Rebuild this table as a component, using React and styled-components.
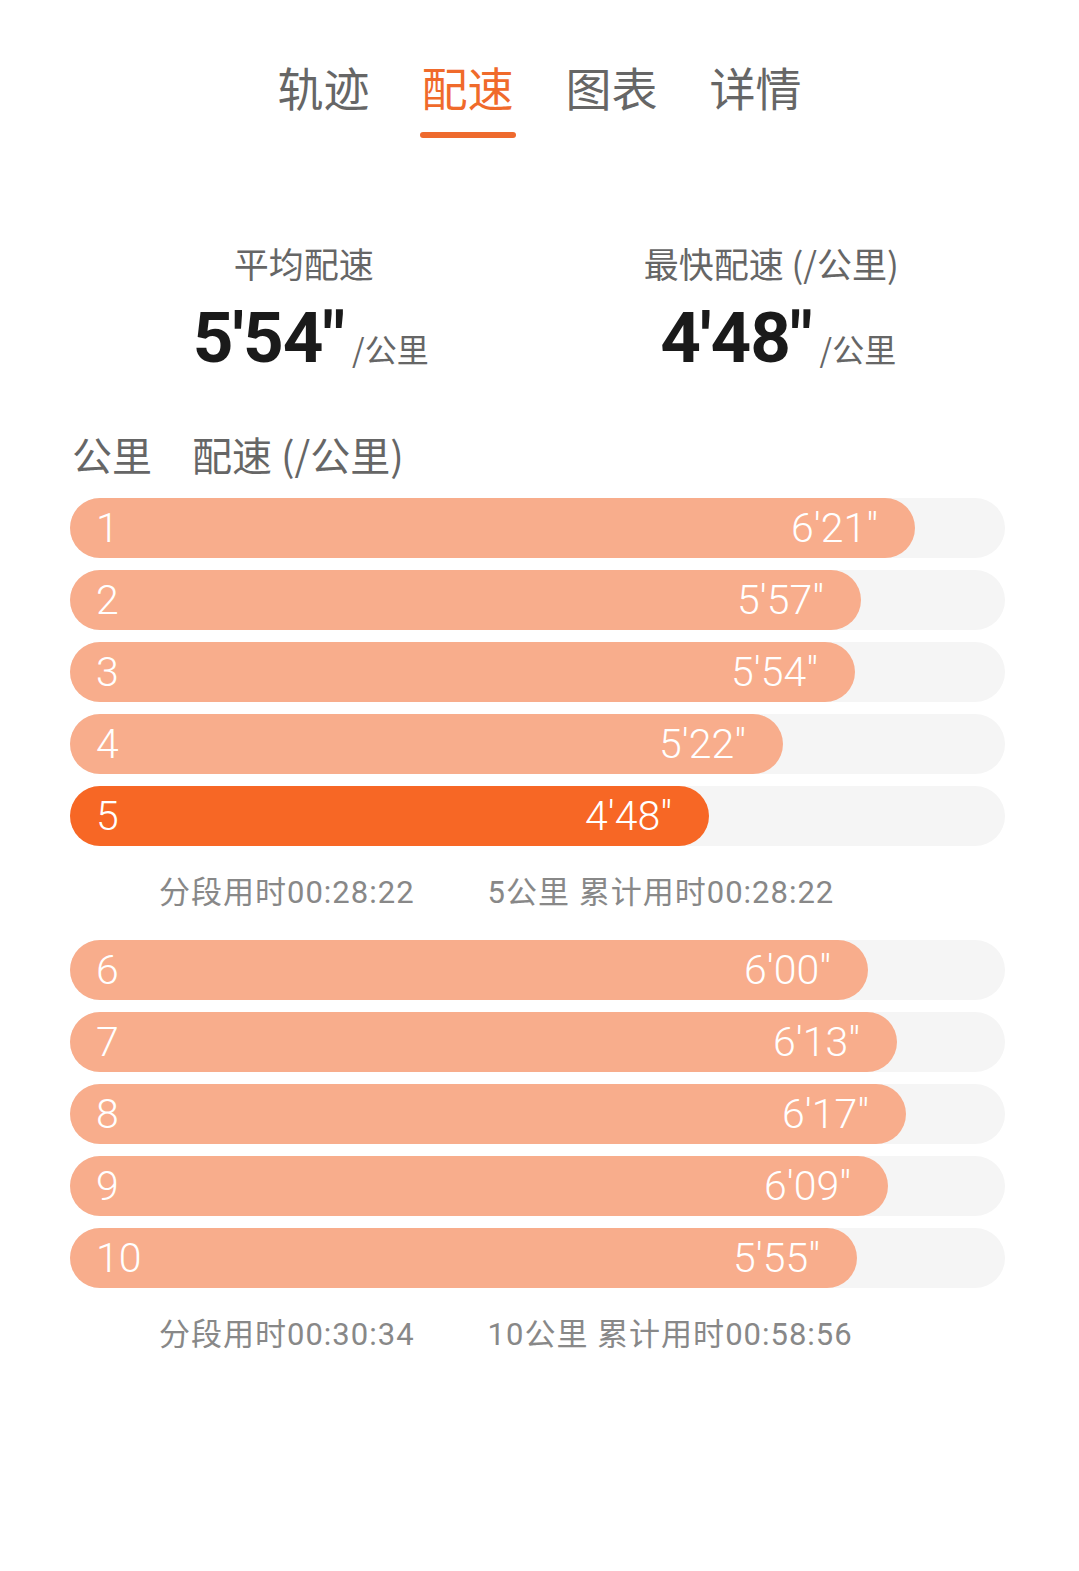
import React from "react";
import styled, { createGlobalStyle } from "styled-components";

const GlobalStyle = createGlobalStyle`
  body {
    margin: 0;
    background: #ffffff;
    font-family: Roboto, "Noto Sans CJK SC", sans-serif;
  }
`;

const Page = styled.div`
  width: 1079px;
  min-height: 1571px;
  background: #ffffff;
  box-sizing: border-box;
`;

const Tabs = styled.div`
  display: flex;
  justify-content: center;
  gap: 48px;
  padding-top: 63px;
`;

const Tab = styled.div`
  width: 96px;
  display: flex;
  flex-direction: column;
  align-items: center;
  font-size: 46px;
  line-height: 46px;
  color: ${(p) => (p.$active ? "#f06a2b" : "#666666")};
  font-family: "Noto Sans CJK SC", sans-serif;
`;

const Underline = styled.div`
  width: 96px;
  height: 6px;
  margin-top: 23px;
  border-radius: 3px;
  background: ${(p) => (p.$active ? "#ee6a2e" : "transparent")};
`;

const Stats = styled.div`
  display: grid;
  grid-template-columns: 1fr 1fr;
  margin: 104px 74px 0 70px;
`;

const Stat = styled.div`
  display: flex;
  flex-direction: column;
  align-items: center;
`;

const StatLabel = styled.div`
  font-family: "Noto Sans CJK SC", sans-serif;
  font-size: 35px;
  line-height: 42px;
  color: #666666;
`;

const StatValue = styled.div`
  display: flex;
  align-items: baseline;
  margin-top: 19px;
  margin-left: 14px;
`;

const Big = styled.span`
  display: inline-block;
  font-family: Roboto, sans-serif;
  font-weight: 700;
  font-size: 71px;
  line-height: 70px;
  color: #1a1a1a;
  letter-spacing: -1px;
`;

const Unit = styled.span`
  font-family: "Noto Sans CJK SC", sans-serif;
  font-size: 32px;
  color: #666666;
  margin-left: 8px;
`;

const Section = styled.div`
  margin: 0 74px 0 70px;
`;

const Header = styled.div`
  margin: 58px 0 21px 2px;
  font-family: "Noto Sans CJK SC", sans-serif;
  font-size: 40px;
  line-height: 46px;
  color: #666666;
  display: flex;
  gap: 40px;
`;

const Rows = styled.div`
  display: flex;
  flex-direction: column;
  gap: 12px;
`;

const Track = styled.div`
  height: 60px;
  border-radius: 30px;
  background: #f5f5f5;
  display: flex;
`;

const Fill = styled.div`
  width: ${(p) => p.$w}px;
  height: 60px;
  border-radius: 30px;
  background: ${(p) => (p.$fast ? "#f76725" : "#f8ad8c")};
  display: flex;
  align-items: center;
  justify-content: space-between;
  padding: 0 37px 0 26px;
  box-sizing: border-box;
  color: #ffffff;
  font-family: Roboto, sans-serif;
  font-weight: 300;
  font-size: 41px;
`;

const Summary = styled.div`
  display: flex;
  gap: 73px;
  padding-left: 89px;
  margin: 27px 0 27px;
  font-family: Roboto, "Noto Sans CJK SC", sans-serif;
  font-size: 31px;
  line-height: 40px;
  letter-spacing: 1px;
  color: #888888;
`;

const splits = [
  { km: 1, pace: "6'21\"", w: 845 },
  { km: 2, pace: "5'57\"", w: 791 },
  { km: 3, pace: "5'54\"", w: 785 },
  { km: 4, pace: "5'22\"", w: 713 },
  { km: 5, pace: "4'48\"", w: 639, fast: true },
  { km: 6, pace: "6'00\"", w: 798 },
  { km: 7, pace: "6'13\"", w: 827 },
  { km: 8, pace: "6'17\"", w: 836 },
  { km: 9, pace: "6'09\"", w: 818 },
  { km: 10, pace: "5'55\"", w: 787 },
];

const groups = [
  { rows: splits.slice(0, 5), seg: "00:28:22", km: 5, total: "00:28:22" },
  { rows: splits.slice(5), seg: "00:30:34", km: 10, total: "00:58:56" },
];

function SplitRow({ split }) {
  return (
    <Track>
      <Fill $w={split.w} $fast={split.fast}>
        <span>{split.km}</span>
        <span>{split.pace}</span>
      </Fill>
    </Track>
  );
}

export default function App() {
  const tabs = ["轨迹", "配速", "图表", "详情"];
  return (
    <Page>
      <GlobalStyle />
      <Tabs>
        {tabs.map((t) => (
          <Tab key={t} $active={t === "配速"}>
            {t}
            <Underline $active={t === "配速"} />
          </Tab>
        ))}
      </Tabs>

      <Stats>
        <Stat>
          <StatLabel>平均配速</StatLabel>
          <StatValue>
            <Big>5'54"</Big>
            <Unit>/公里</Unit>
          </StatValue>
        </Stat>
        <Stat>
          <StatLabel>最快配速 (/公里)</StatLabel>
          <StatValue>
            <Big>4'48"</Big>
            <Unit>/公里</Unit>
          </StatValue>
        </Stat>
      </Stats>

      <Section>
        <Header>
          <span>公里</span>
          <span>配速 (/公里)</span>
        </Header>
        {groups.map((g) => (
          <div key={g.km}>
            <Rows>
              {g.rows.map((s) => (
                <SplitRow key={s.km} split={s} />
              ))}
            </Rows>
            <Summary>
              <span>分段用时{g.seg}</span>
              <span>
                {g.km}公里 累计用时{g.total}
              </span>
            </Summary>
          </div>
        ))}
      </Section>
    </Page>
  );
}
